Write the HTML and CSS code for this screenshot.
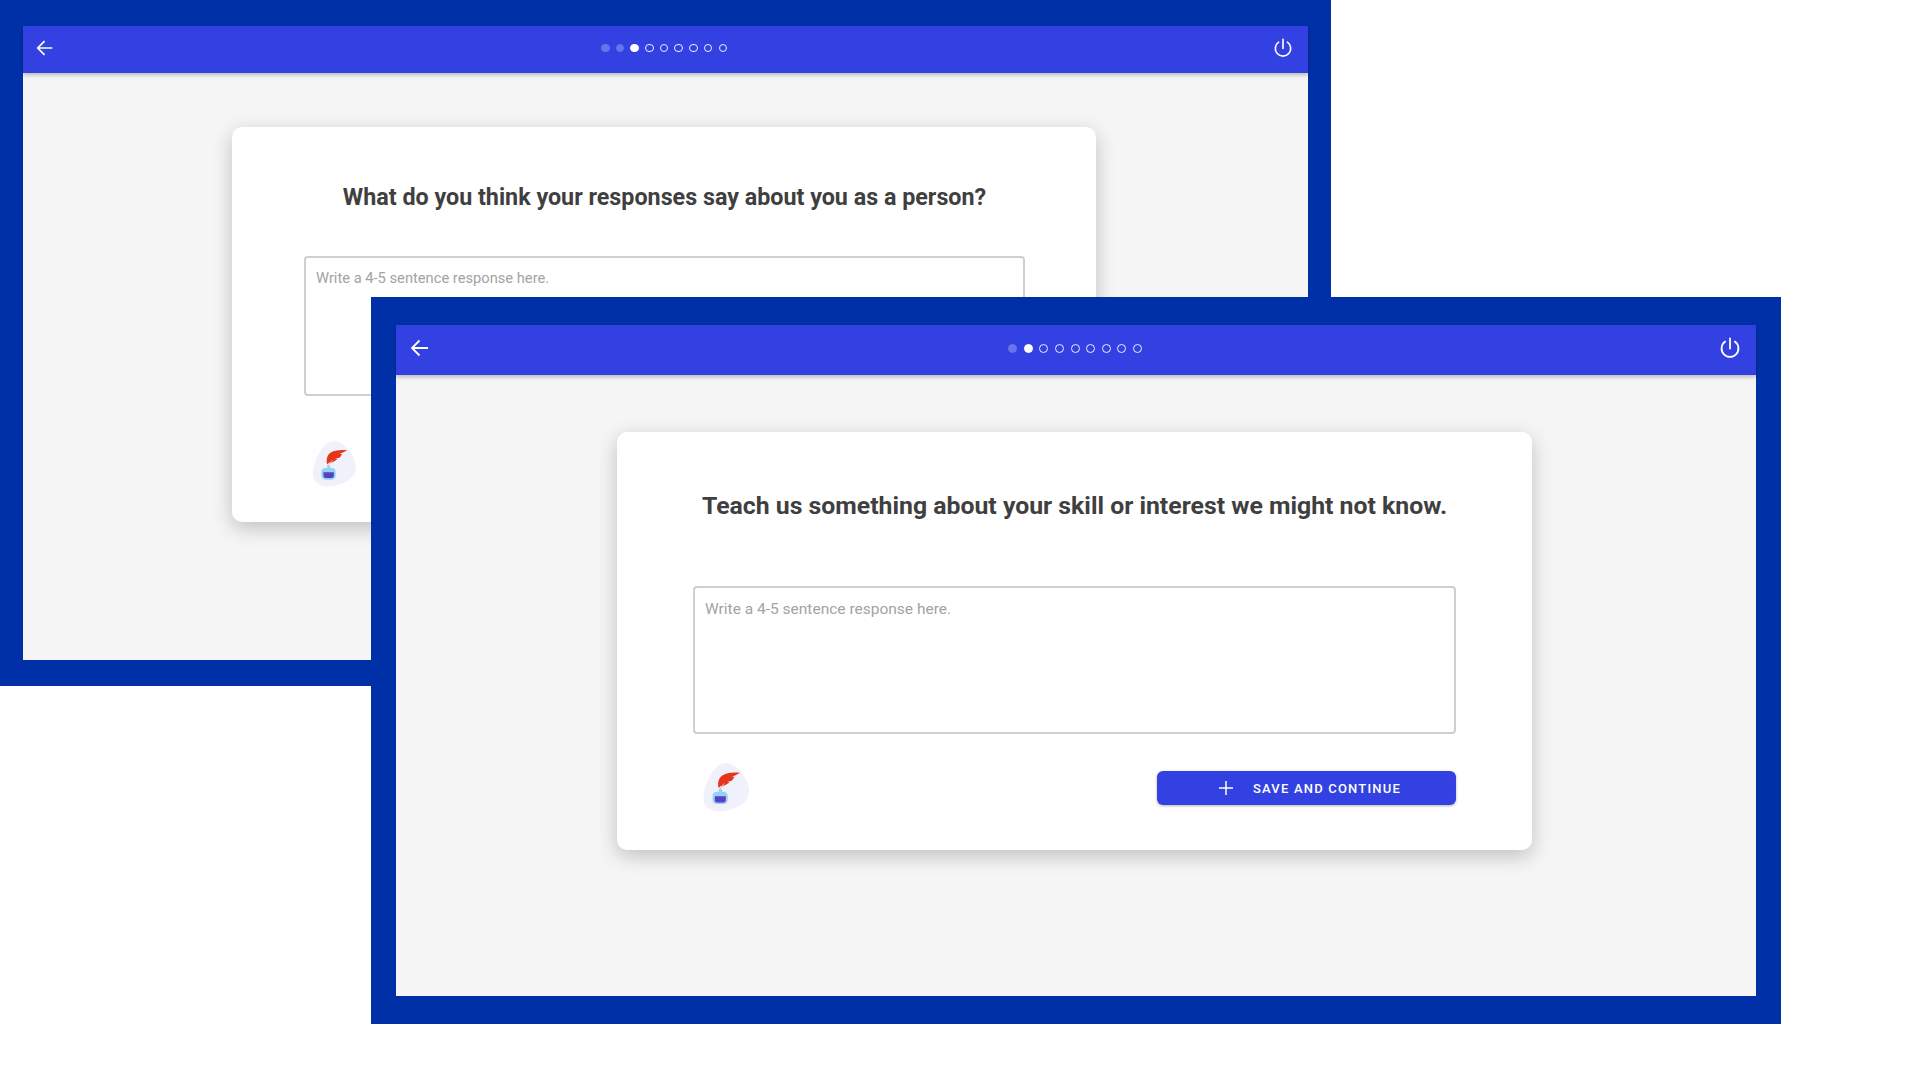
FILE: index.html
```html
<!DOCTYPE html>
<html lang="en">
    <head>
        <meta charset="UTF-8" />
        <meta name="viewport" content="width=device-width, initial-scale=1.0" />
        <title>Writing prompts</title>
        <link rel="stylesheet" href="styles.css">
    </head>
    <body>
        <svg class="defs" width="0" height="0" aria-hidden="true">
            <symbol id="icon-back" viewBox="0 0 24 24">
                <path d="M20 12H4.500M11.500 4.500L4 12l7.500 7.500" fill="none" stroke="currentColor" stroke-width="1.800" />
            </symbol>
            <symbol id="icon-power" viewBox="0 0 24 24">
                <path d="M12 2.500v10M7.200 5.600a8.400 8.400 0 1 0 9.600 0" fill="none" stroke="currentColor" stroke-width="1.800" stroke-linecap="round" />
            </symbol>
            <symbol id="icon-logo" viewBox="0 0 47 50">
                <path d="M22 0C30 0 37 6 42 15c5 9 6 15 1 22-6 8-21 13-31 11C3 46-1 40 1 30 2 22 10 1 22 0z" fill="#f1f1fc" />
                <path d="M37 9.800c-6.500-.8-13.500-.4-17.800 2.700-3.800 2.800-4.900 7.700-3.400 12.500l2-2 2.800-.2c2.300-.9 4.400-2.100 6-3.600l-2.600-.2 4.800-1.300c1.100-1.200 2-2.500 2.700-3.900l-2.800.1c3-1.200 5.800-2.500 8.300-4.100z" fill="#e5361b" />
                <path d="M16.300 27l4.800-6.500" stroke="#f6b3a4" stroke-width="1" fill="none" />
                <path d="M15.200 26.200h3.800v2.500h1.800c2 0 3.900 1.800 3.900 3.900v4.100c0 2.600-1.900 4.400-4.100 4.400h-6.900c-2.200 0-4.100-1.800-4.100-4.400v-4.100c0-2.100 1.900-3.900 3.900-3.900h2.700z" fill="#93d2f8" />
                <path d="M11.800 33.300h11v3.700c0 1.400-.9 2.400-2.200 2.400h-6.600c-1.300 0-2.200-1-2.200-2.400z" fill="#5b3ec4" />
            </symbol>
            <symbol id="icon-plus" viewBox="0 0 14 14">
                <path d="M7 0v14M0 7h14" fill="none" stroke="currentColor" stroke-width="1.500" />
            </symbol>
        </svg>

        <section class="window window-back">
            <header class="topbar">
                <svg class="topbar-icon"><use href="#icon-back" /></svg>
                <div class="dots">
                    <span class="dot done"></span>
                    <span class="dot done"></span>
                    <span class="dot current"></span>
                    <span class="dot"></span>
                    <span class="dot"></span>
                    <span class="dot"></span>
                    <span class="dot"></span>
                    <span class="dot"></span>
                    <span class="dot"></span>
                </div>
                <svg class="topbar-icon"><use href="#icon-power" /></svg>
            </header>
            <main class="content">
                <div class="card">
                    <h1>What do you think your responses say about you as a person?</h1>
                    <div class="response">Write a 4-5 sentence response here.</div>
                    <div class="card-footer">
                        <svg class="logo"><use href="#icon-logo" /></svg>
                    </div>
                </div>
            </main>
        </section>

        <section class="window window-front">
            <header class="topbar">
                <svg class="topbar-icon"><use href="#icon-back" /></svg>
                <div class="dots">
                    <span class="dot done"></span>
                    <span class="dot current"></span>
                    <span class="dot"></span>
                    <span class="dot"></span>
                    <span class="dot"></span>
                    <span class="dot"></span>
                    <span class="dot"></span>
                    <span class="dot"></span>
                    <span class="dot"></span>
                </div>
                <svg class="topbar-icon"><use href="#icon-power" /></svg>
            </header>
            <main class="content">
                <div class="card">
                    <h1>Teach us something about your skill or interest we might not know.</h1>
                    <div class="response">Write a 4-5 sentence response here.</div>
                    <div class="card-footer">
                        <svg class="logo"><use href="#icon-logo" /></svg>
                        <button class="save-button" type="button">
                            <svg class="plus"><use href="#icon-plus" /></svg>
                            <span>Save and continue</span>
                        </button>
                    </div>
                </div>
            </main>
        </section>
    </body>
</html>
```

FILE: styles.css
```css
:root {
    --frame: #0030a8;
    --primary: #3341e3;
    --background: #f5f5f5;
    --surface: #ffffff;
    --text: #3f3f3f;
    --placeholder: #a3a3a3;
    --border: #cfcfcf;
}

* {
    margin: 0;
    padding: 0;
    box-sizing: border-box;
}

body {
    position: relative;
    height: 1080px;
    overflow: hidden;
    font-family: Roboto, "Liberation Sans", sans-serif;
    background-color: #ffffff;
    color: var(--text);
}

.defs {
    position: absolute;
}

/* the two windows sit on a free canvas, the second over the first */
.window {
    position: absolute;
    display: flex;
    flex-direction: column;
    background-color: var(--background);
    border: solid var(--frame);
}

.window-back {
    left: 0;
    top: 0;
    width: 1331px;
    height: 686px;
    border-width: 26px 23px;
}

.window-front {
    left: 371px;
    top: 297px;
    width: 1410px;
    height: 727px;
    border-width: 28px 25px 28px;
}

.topbar {
    display: flex;
    align-items: center;
    justify-content: space-between;
    background-color: var(--primary);
    color: #ffffff;
    box-shadow: 0 2px 4px rgba(0, 0, 0, 0.25);
    position: relative;
}

.window-back .topbar {
    height: 47px;
    padding: 0 14px 3px 11px;
}

.window-front .topbar {
    height: 50px;
    padding: 0 14px 4px 12px;
}

.topbar-icon {
    width: 24px;
    height: 24px;
}

.window-back .topbar-icon {
    width: 22px;
    height: 22px;
}

.dots {
    display: flex;
}

.dot {
    border-radius: 50%;
    border: 1.7px solid rgba(255, 255, 255, 0.9);
}

.dot.done {
    background-color: #6a74ea;
    border-color: #6a74ea;
}

.dot.current {
    background-color: #ffffff;
    border-color: #ffffff;
}

.window-back .dots {
    gap: 6.2px;
}

.window-back .dot {
    width: 8.5px;
    height: 8.5px;
}

.window-front .dots {
    gap: 6.6px;
}

.window-front .dot {
    width: 9px;
    height: 9px;
}

.content {
    flex: 1;
    display: flex;
    justify-content: center;
    align-items: flex-start;
}

.window-back .content {
    padding: 54px 3px 0 0;
}

.window-front .content {
    padding: 57px 3px 0 0;
}

.card {
    background-color: var(--surface);
    border-radius: 10px;
    box-shadow: 0 6px 20px rgba(0, 0, 0, 0.22);
}

.window-back .card {
    width: 864px;
    height: 395px;
    padding: 56px 71px 0 72px;
}

.window-front .card {
    width: 915px;
    height: 418px;
    padding: 59px 76px 0;
}

h1 {
    font-weight: 700;
    text-align: center;
    white-space: nowrap;
}

.window-back h1 {
    font-size: 23.300px;
    line-height: 28px;
}

.window-front h1 {
    font-size: 24.800px;
    line-height: 30px;
}

.response {
    border: 2px solid var(--border);
    border-radius: 4px;
    background-color: var(--surface);
    color: var(--placeholder);
    font-weight: 400;
}

.window-back .response {
    height: 140px;
    margin-top: 45px;
    padding: 11px 10px;
    font-size: 14.700px;
}

.window-front .response {
    height: 148px;
    margin-top: 65px;
    padding: 12px 10px;
    font-size: 15.500px;
}

.card-footer {
    display: flex;
    align-items: center;
    justify-content: space-between;
}

.window-back .card-footer {
    margin-top: 45px;
    padding-left: 8px;
}

.window-front .card-footer {
    margin-top: 29px;
    padding-left: 10px;
}

.logo {
    height: 50px;
    width: 47px;
}

.window-back .logo {
    width: 45px;
    height: 47px;
}

.save-button {
    display: flex;
    align-items: center;
    justify-content: center;
    gap: 20px;
    width: 299px;
    height: 34px;
    padding-left: 7px;
    border: none;
    border-radius: 6px;
    background-color: var(--primary);
    color: #ffffff;
    font-family: inherit;
    font-size: 13px;
    font-weight: 500;
    letter-spacing: 1.200px;
    text-transform: uppercase;
    box-shadow: 0 1px 3px rgba(0, 0, 0, 0.3);
}

.plus {
    width: 14px;
    height: 14px;
}
```
